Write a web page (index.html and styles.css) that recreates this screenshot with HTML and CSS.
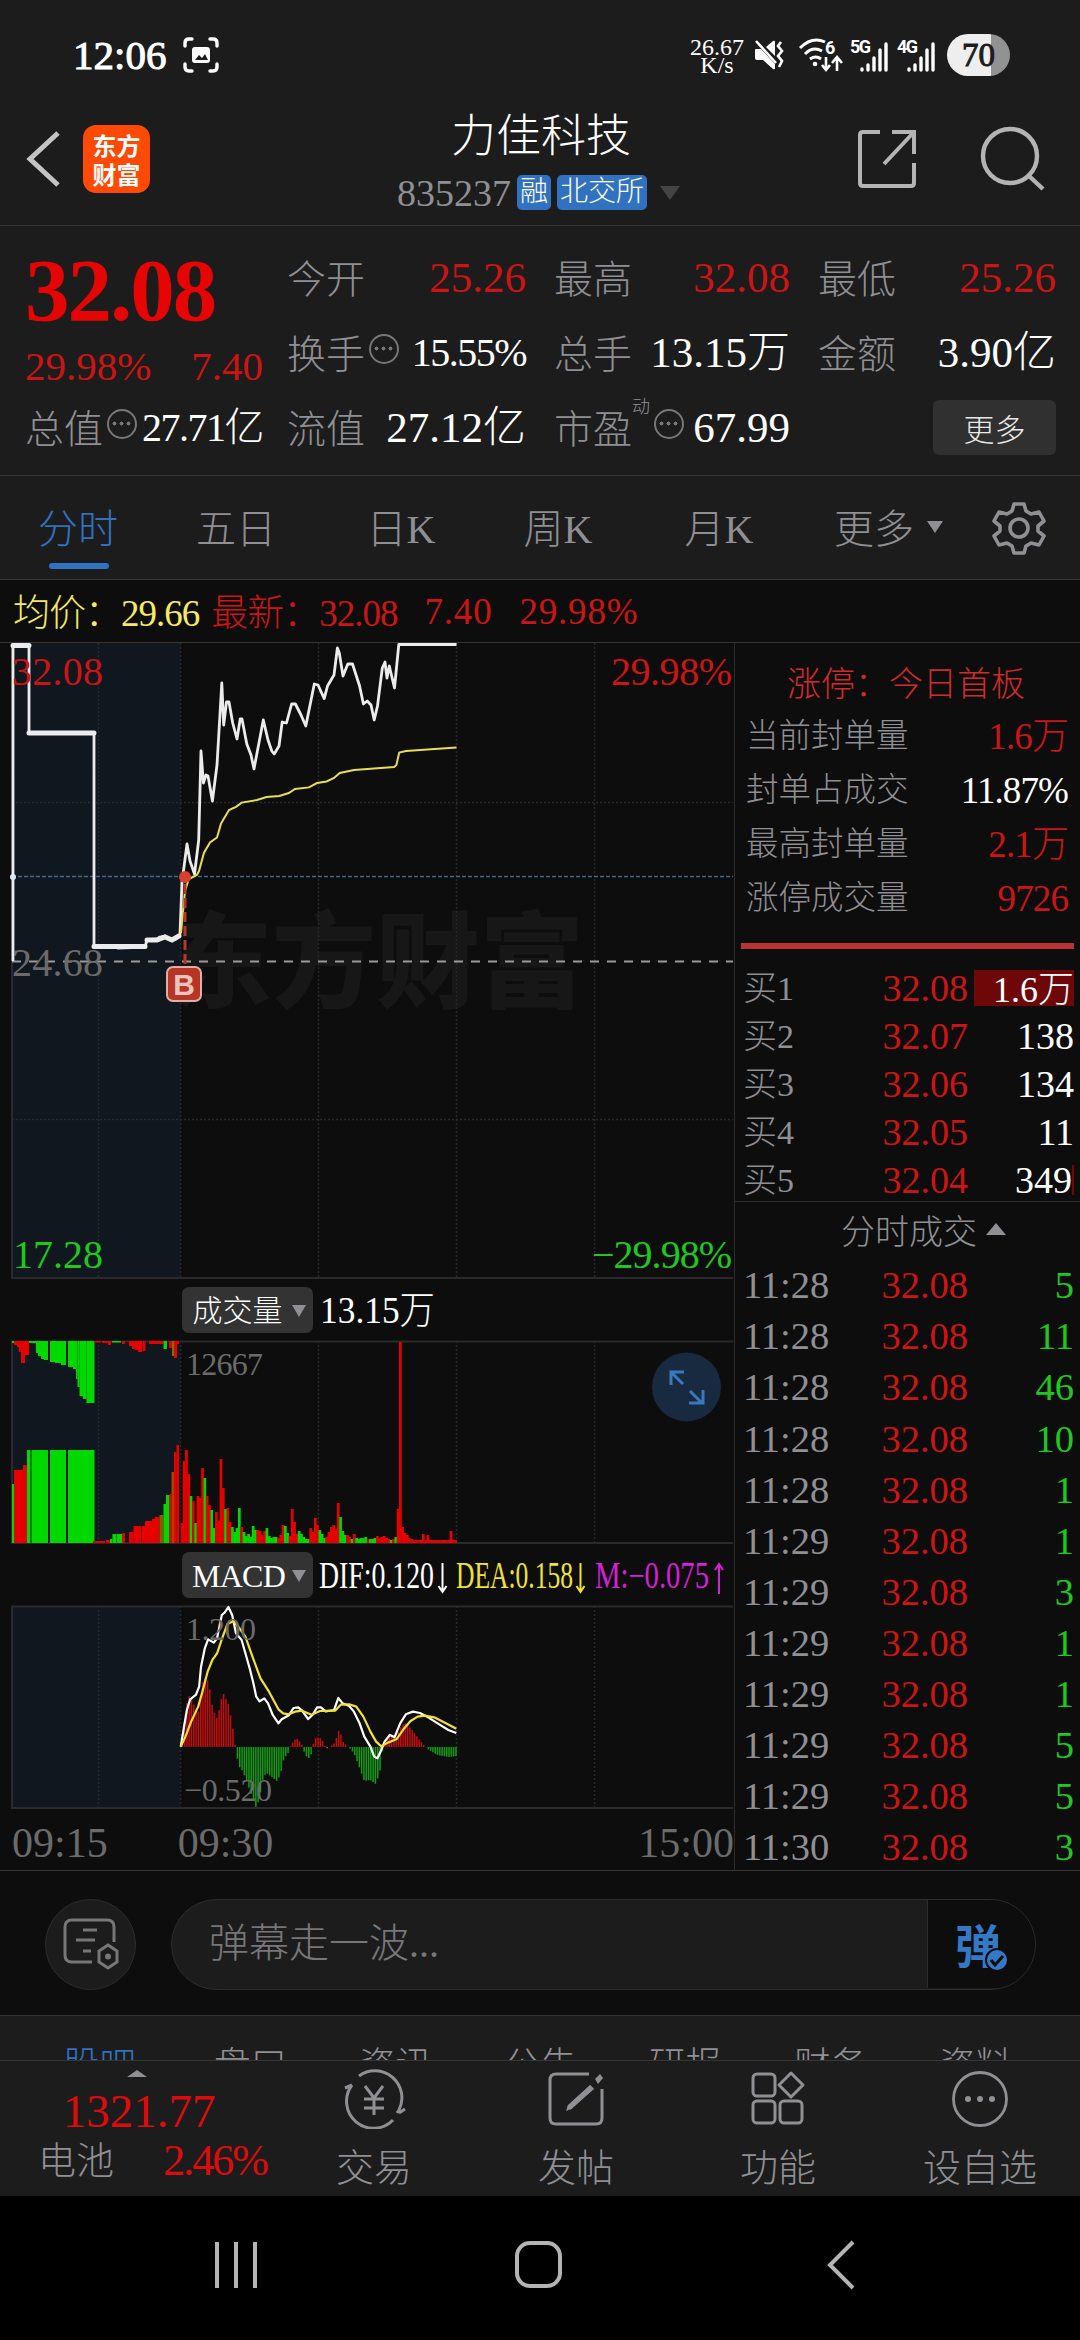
FILE: index.html
```html
<!DOCTYPE html>
<html lang="zh-CN">
<head>
  <meta charset="UTF-8">
  <meta name="viewport" content="width=device-width, initial-scale=1.0">
  <title>力佳科技 835237</title>
  <link rel="stylesheet" href="styles.css">
</head>
<body>
  <div class="status">
    <span class="clock">12:06</span>
    <svg class="shot" width="36" height="36" viewBox="0 0 36 36" fill="none" stroke="#fff" stroke-width="3.4" stroke-linecap="round">
      <path d="M2 9V6q0-4 4-4h3M27 2h3q4 0 4 4v3M34 27v3q0 4-4 4h-3M9 34H6q-4 0-4-4v-3"/>
      <rect x="9" y="10" width="18" height="16" rx="3" fill="#fff" stroke="none"/>
      <path d="M12 23l4-5 3 3 3-4 3 6z" fill="#1c1c1c" stroke="none"/>
    </svg>
    <div class="speed"><span>26.67</span><span>K/s</span></div>
    <svg class="mute" width="32" height="32" viewBox="0 0 32 32" fill="#fff">
      <path d="M1 11q0-1 1-1h5l14 15v4q0 2-2 1L9 21H3q-2 0-2-2zM12 8l7-6q2-1 2 1v14z"/>
      <path d="M2 2l20 22M27 3l-3 4 4 5-4 5 4 5-3 6" fill="none" stroke="#fff" stroke-width="2.6"/>
    </svg>
    <svg class="wifi" width="46" height="36" viewBox="0 0 46 36" fill="none" stroke="#fff" stroke-width="3">
      <path d="M2 11Q14-1 27 5M7 17q8-8 17-3M12 22q6-4 11 0"/>
      <circle cx="17" cy="27" r="2.3" fill="#fff" stroke="none"/>
      <path d="M28 20v12M24 28l4 5 4-5M39 34V21M34 26l5-6 5 6" stroke-width="2.6"/>
      <text x="27" y="17" class="badge-text">6</text>
    </svg>
    <svg class="signal" width="40" height="36" viewBox="0 0 40 36" stroke="#fff" stroke-width="3.4" stroke-linecap="round">
      <path d="M12 33v-1M18 33v-5M24 33V21M30 33V13M36 33V7"/>
      <text x="0" y="16" class="badge-text" textLength="21">5G</text>
    </svg>
    <svg class="signal second" width="40" height="36" viewBox="0 0 40 36" stroke="#fff" stroke-width="3.4" stroke-linecap="round">
      <path d="M12 33v-1M18 33v-5M24 33V21M30 33V13M36 33V7"/>
      <text x="0" y="16" class="badge-text" textLength="21">4G</text>
    </svg>
    <span class="battery">70</span>
  </div>

  <header class="header">
    <div class="header-left">
      <svg width="34" height="56" viewBox="0 0 34 56" fill="none" stroke="#c4c4c4" stroke-width="5"><path d="M32 2L4 28l28 26"/></svg>
      <div class="logo"><span>东方</span><span>财富</span></div>
    </div>
    <div class="header-title">
      <h1>力佳科技</h1>
      <div class="code"><span>835237</span><b>融</b><b>北交所</b><i class="tri-down"></i></div>
    </div>
    <div class="header-right">
      <svg width="62" height="62" viewBox="0 0 62 62" fill="none" stroke="#b4b4b4" stroke-width="4"><path d="M24 4H7q-3 0-3 3v48q0 3 3 3h48q3 0 3-3V35M36 4h22v22M58 4L28 36"/></svg>
      <svg width="66" height="66" viewBox="0 0 66 66" fill="none" stroke="#b4b4b4" stroke-width="4.4"><circle cx="30" cy="30" r="27"/><path d="M49 50l14 13"/></svg>
    </div>
  </header>

  <section class="quote">
    <div class="quote-main">
      <div class="price">32.08</div>
      <div class="change"><span>29.98%</span><span>7.40</span></div>
      <div class="item tight"><label>总值</label><i class="more-dot"></i><span>27.71亿</span></div>
    </div>
    <div class="quote-grid">
      <div class="item up"><label>今开</label><span>25.26</span></div>
      <div class="item up"><label>最高</label><span>32.08</span></div>
      <div class="item up"><label>最低</label><span>25.26</span></div>
      <div class="item tight"><label>换手</label><i class="more-dot"></i><span>15.55%</span></div>
      <div class="item"><label>总手</label><span>13.15万</span></div>
      <div class="item"><label>金额</label><span>3.90亿</span></div>
      <div class="item"><label>流值</label><span>27.12亿</span></div>
      <div class="item"><label>市盈</label><sup>动</sup><i class="more-dot"></i><span>67.99</span></div>
      <div class="item"><button class="more-btn">更多</button></div>
    </div>
  </section>

  <nav class="tabs">
    <a class="active">分时</a>
    <a>五日</a>
    <a>日K</a>
    <a>周K</a>
    <a>月K</a>
    <a>更多<i class="tri-down"></i></a>
    <svg width="54" height="54" viewBox="0 0 54 54" fill="none" stroke="#8f8f94" stroke-width="3.6" stroke-linejoin="round">
      <path d="M22 3h10l2 7 5 3 8-2 5 9-6 5v5l6 5-5 9-8-2-5 3-2 7H22l-2-7-5-3-8 2-5-9 6-5v-5l-6-5 5-9 8 2 5-3z"/>
      <circle cx="27" cy="27" r="9"/>
    </svg>
  </nav>

  <div class="avg">
    <span class="yellow">均价<em>：</em>29.66</span>
    <span>最新<em>：</em>32.08</span>
    <span>7.40</span>
    <span>29.98%</span>
  </div>

  <main class="board">
    <div class="charts">
      <!-- intraday price -->
      <svg class="chart" width="734" height="637" viewBox="0 643 734 637">
        <rect x="12" y="643" width="168.500" height="635" fill="#10171f"/>
        <text x="376" y="1000" class="watermark" textLength="416" lengthAdjust="spacingAndGlyphs">东方财富</text>
        <path class="grid" d="M12 802.500H733M12 1119.500H733M98.500 643V1278M180.500 643V1278M318.500 643V1278M456.500 643V1278M594.500 643V1278"/>
        <path class="frame" d="M12 643V1278H733"/>
        <path d="M12 876.500H733" stroke="#3a6a94" stroke-width="1.500" stroke-dasharray="4 2"/>
        <path d="M12 961.500H733" stroke="#9a9a9a" stroke-width="2" stroke-dasharray="9 8"/>
        <text x="12" y="976" class="axis" textLength="91">24.68</text>
        <polyline class="line" points="13,961 13,645 29,645 29,733 94,733 94,946 115,946 118,948 145,947 147,940 157,939 160,937 165,936 170,940 176,939 180,934 182,882 187,844 190,861 194.500,874 198.700,840 201,751 203.400,783 206,775 208,776 212.400,801 217,765 220,714 221.800,683 223.700,725 226.500,702 229,702 232.700,723 237,739 240.200,719 242,719 246.800,744 251,755 254,769 263.300,720 268,740 271.800,751 274.200,754 279,746 282.200,722 286.500,723 291.600,704 295.400,704 301,715 305.800,726 314.300,684 318,685 324.200,698.600 327.500,686 334,675 337.400,648 339.300,653 343,676 347.800,664 352.500,664 359.600,686 363.400,704 367.200,701 371,705 374.200,720 377.500,706 382.300,668 385,662 387,678 389.300,666 394.500,688 398.800,644.500 456.500,644.500"/>
        <path d="M13 645.500H29M29 733H94M94 946.500H145M147 940H157L165 937L172 940L179 936" class="thick"/>
        <polyline class="line-avg" points="181,933 185,891 188.800,879 196.800,875 199,871 203.900,853 210,842.500 217,837.500 221,823.600 229,810 236,806.800 241.600,802.600 257,800 266.600,797 279.400,796 288.800,793 295,789 309,787.400 317,783 326.600,781.500 334,778 339.800,773 354,770 394,767 396.400,765 399.200,752.500 406,751 456.500,747.400"/>
        <path d="M185 884V966" stroke="#b03a2a" stroke-width="3" stroke-dasharray="10 4"/>
        <circle cx="185" cy="877" r="6" fill="#d8402f"/>
        <circle cx="13" cy="877" r="3" fill="#dfe9f5"/>
        <rect x="167" y="967" width="34" height="34" rx="6" fill="#b83425" stroke="#dcb0a8" stroke-width="2"/>
        <text x="184" y="995" class="mark" text-anchor="middle">B</text>
        <text x="12" y="685" class="up-text" textLength="91">32.08</text>
        <text x="732" y="685" class="up-text" text-anchor="end" textLength="121">29.98%</text>
        <text x="13" y="1268" class="down-text" textLength="90">17.28</text>
        <text x="732" y="1268" class="down-text" text-anchor="end" textLength="140">−29.98%</text>
      </svg>

      <div class="pane-head">
        <div class="picker">成交量<i class="tri-down"></i></div>
        <svg width="416" height="60" viewBox="318 0 416 60"><text x="320" y="43" class="head-text" textLength="115" lengthAdjust="spacingAndGlyphs">13.15万</text></svg>
      </div>

      <svg class="chart" width="734" height="205" viewBox="0 1340 734 205">
        <rect x="12" y="1341" width="168.500" height="202" fill="#10171f"/>
        <path class="grid" d="M98.500 1341V1543M318.500 1341V1543M456.500 1341V1543M594.500 1341V1543"/>
        <path class="frame" d="M733 1341.500H12V1543H733"/>
        <g id="volume"></g>
        <path class="grid" d="M180.500 1341V1543"/>
        <text x="186" y="1375" class="scale" textLength="77">12667</text>
        <circle cx="686.500" cy="1387" r="34.500" fill="#182a40"/>
        <path d="M683 1384L672 1373M671 1385V1372H684M690 1391L702 1403M703 1390V1403H689" fill="none" stroke="#3a78bd" stroke-width="3"/>
      </svg>

      <div class="pane-head">
        <div class="picker macd-pick">MACD<i class="tri-down"></i></div>
        <svg width="416" height="60" viewBox="318 0 416 60" class="macd-values">
          <text x="319" y="43" fill="#fff" textLength="115" lengthAdjust="spacingAndGlyphs">DIF:0.120</text>
          <path d="M442.500 18V46M438.500 41l4 6 4-6" stroke="#fff"/>
          <text x="456" y="43" fill="#f2e233" textLength="117" lengthAdjust="spacingAndGlyphs">DEA:0.158</text>
          <path d="M580.500 18V46M576.500 41l4 6 4-6" stroke="#f2e233"/>
          <text x="595" y="43" fill="#d81ed8" textLength="114" lengthAdjust="spacingAndGlyphs">M:−0.075</text>
          <path d="M719 49V20M715 25l4-6 4 6" stroke="#d81ed8"/>
        </svg>
      </div>

      <svg class="chart" width="734" height="205" viewBox="0 1605 734 205">
        <rect x="12" y="1606" width="168.500" height="202" fill="#10171f"/>
        <path class="grid" d="M98.500 1606V1808M180.500 1606V1808M318.500 1606V1808M456.500 1606V1808M594.500 1606V1808"/>
        <path class="frame" d="M733 1606.500H12V1808H733"/>
        <g id="macd"></g>
        <g transform="matrix(.4719 0 0 .3333 0 1540)">
          <polyline class="dif" points="383,620 390,560 396,510 403,478 415,465 422,440 426,380 434,325 441,298 453,308 460,295 470,225 476,218 484,201 492,225 500,280 512,300 520,340 530,390 537,430 543,470 550,484 560,475 568,490 578,525 590,550 597,538 612,526 622,504 632,502 640,512 653,537 662,525 672,502 680,502 690,514 708,510 717,474 726,490 740,498 750,515 762,550 772,590 785,620 793,650 800,655 808,630 815,605 826,585 836,592 848,550 860,523 875,515 890,519 905,530 925,548 950,570 967,579"/>
          <polyline class="dea" points="383,620 393,590 405,545 420,500 428,460 440,395 450,360 460,340 472,290 482,252 494,244 505,260 520,290 535,350 552,415 570,455 590,508 600,520 612,523 625,515 640,512 660,524 678,513 710,512 722,494 740,493 755,500 770,530 785,575 797,605 808,619 822,608 840,598 855,568 870,543 885,530 900,527 920,532 945,550 967,566"/>
        </g>
        <text x="186" y="1640" class="scale" textLength="70">1.200</text>
        <text x="184" y="1801" class="scale" textLength="88">−0.520</text>
      </svg>

      <div class="times"><span>09:15</span><span>09:30</span><span>15:00</span></div>
    </div>

    <aside class="side">
      <div class="limit">
        <h2>涨停<em>：</em>今日首板</h2>
        <div><label>当前封单量</label><span class="red">1.6万</span></div>
        <div><label>封单占成交</label><span>11.87%</span></div>
        <div><label>最高封单量</label><span class="red">2.1万</span></div>
        <div><label>涨停成交量</label><span class="red">9726</span></div>
      </div>
      <div class="orders">
        <div><label>买1</label><b>32.08</b><span class="full">1.6万</span></div>
        <div><label>买2</label><b>32.07</b><span>138</span></div>
        <div><label>买3</label><b>32.06</b><span>134</span></div>
        <div><label>买4</label><b>32.05</b><span>11</span></div>
        <div><label>买5</label><b>32.04</b><span class="sliver">349</span></div>
      </div>
      <div class="ticks">
        <h3>分时成交<i class="tri-up"></i></h3>
        <div><label>11:28</label><b>32.08</b><span>5</span></div>
        <div><label>11:28</label><b>32.08</b><span>11</span></div>
        <div><label>11:28</label><b>32.08</b><span>46</span></div>
        <div><label>11:28</label><b>32.08</b><span>10</span></div>
        <div><label>11:28</label><b>32.08</b><span>1</span></div>
        <div><label>11:29</label><b>32.08</b><span>1</span></div>
        <div><label>11:29</label><b>32.08</b><span>3</span></div>
        <div><label>11:29</label><b>32.08</b><span>1</span></div>
        <div><label>11:29</label><b>32.08</b><span>1</span></div>
        <div><label>11:29</label><b>32.08</b><span>5</span></div>
        <div><label>11:29</label><b>32.08</b><span>5</span></div>
        <div><label>11:30</label><b>32.08</b><span>3</span></div>
      </div>
    </aside>
  </main>

  <div class="comment">
    <div class="round">
      <svg width="58" height="54" viewBox="0 0 58 54" fill="none" stroke="#77777a" stroke-width="3">
        <path d="M52 25V10q0-7-7-7H10Q3 3 3 10v28q0 7 7 7h20M21 13h14M14 23h19M21 34h8"/>
        <path d="M46 28l9 6v11l-9 6-9-6V34z"/><circle cx="46" cy="39.500" r="3" fill="#77777a" stroke="none"/>
      </svg>
    </div>
    <div class="input">
      <span>弹幕走一波...</span>
      <div class="danmu">弹
        <svg width="24" height="24" viewBox="0 0 24 24"><circle cx="12" cy="12" r="11" fill="#3579c6" stroke="#0d0d0d" stroke-width="2"/><path d="M6 12l4 5 8-9" fill="none" stroke="#0d0d0d" stroke-width="3"/></svg>
      </div>
    </div>
  </div>

  <div class="subtabs">
    <span class="active">股吧</span><span>盘口</span><span>资讯</span><span>公告</span><span>研报</span><span>财务</span><span>资料</span>
  </div>

  <footer class="bottom">
    <div class="index">
      <i class="tri-up"></i>
      <strong>1321.77</strong>
      <div><label>电池</label><span>2.46%</span></div>
    </div>
    <div class="nav-item">
      <svg width="66" height="60" viewBox="0 0 66 60" fill="none" stroke="#8f8f94" stroke-width="3">
        <path d="M18 7A27 27 0 0 1 58 41l-2 3M4 19l7-3M11 16A27 27 0 0 0 52 51M58 44l6-4"/>
        <path d="M24 17l9 12 9-12M23 30h20M23 39h20M33 29v17"/>
      </svg>
      <span>交易</span>
    </div>
    <div class="nav-item">
      <svg width="58" height="60" viewBox="0 0 58 60" fill="none" stroke="#8f8f94" stroke-width="3">
        <path d="M42 5H9Q3 5 3 11v38q0 6 6 6h40q6 0 6-6V20"/>
        <path d="M43 16l4 4L24 40l-5 2 2-6zM48 10l5-5 3 4-5 6z" fill="#8f8f94" stroke="none"/>
        <path d="M45 18L22 39" stroke-width="5"/>
      </svg>
      <span>发帖</span>
    </div>
    <div class="nav-item">
      <svg width="58" height="60" viewBox="0 0 58 60" fill="none" stroke="#8f8f94" stroke-width="3">
        <rect x="4" y="5" width="22" height="22" rx="4"/><rect x="4" y="32" width="22" height="22" rx="4"/><rect x="31" y="32" width="22" height="22" rx="4"/>
        <path d="M42 4l12 12-12 12-12-12z" stroke-linejoin="round"/>
      </svg>
      <span>功能</span>
    </div>
    <div class="nav-item">
      <svg width="58" height="60" viewBox="0 0 58 60" fill="#8f8f94">
        <circle cx="29" cy="30" r="26.500" fill="none" stroke="#8f8f94" stroke-width="2.800"/>
        <circle cx="17" cy="30" r="3"/><circle cx="29" cy="30" r="3"/><circle cx="41" cy="30" r="3"/>
      </svg>
      <span>设自选</span>
    </div>
  </footer>

  <div class="system-nav">
    <svg width="46" height="50" viewBox="0 0 46 50" stroke="#b4b4b4" stroke-width="4"><path d="M4 2v46M23 2v46M42 2v46"/></svg>
    <svg width="50" height="50" viewBox="0 0 50 50" fill="none" stroke="#b4b4b4" stroke-width="4"><rect x="4" y="3" width="43" height="43" rx="13"/></svg>
    <svg width="30" height="50" viewBox="0 0 30 50" fill="none" stroke="#b4b4b4" stroke-width="4"><path d="M27 2L4 25l23 23"/></svg>
  </div>

  <script src="charts.js"></script>
</body>
</html>
```

FILE: styles.css
```css
* {
  box-sizing: border-box;
}
body {
  margin: 0;
  width: 1080px;
  height: 2340px;
  overflow: hidden;
  background-color: #0d0d0d;
  color: #fff;
  font-family: "Liberation Serif", "Noto Sans CJK SC", serif;
  font-weight: 300;
  line-height: 1;
  white-space: nowrap;
}
h1, h2, h3 {
  margin: 0;
  font-weight: 300;
}
/* centred full-width colon */
em {
  font-family: "Noto Sans CJK TC", sans-serif;
  font-style: normal;
}
svg {
  display: block;
  flex: none;
}
i {
  flex: none;
}
.tri-down {
  border: 9px solid transparent;
  border-top: 14px solid #8f8f94;
  border-bottom: 0;
}
.tri-up {
  border: 10px solid transparent;
  border-bottom: 12px solid #8f8f94;
  border-top: 0;
}

/* status bar */
.status {
  display: flex;
  align-items: center;
  height: 110px;
  padding: 0 70px 0 73px;
  background-color: #1c1c1c;
}
.clock {
  width: 110px;
  font-size: 41px;
  -webkit-text-stroke: 1px #fff;
}
.speed {
  display: flex;
  flex-direction: column;
  align-items: center;
  width: 52px;
  margin: 1px 11px 0 472px;
  font-size: 24px;
  line-height: 18px;
}
.mute {
  margin-right: 12px;
}
.wifi {
  margin-right: 6px;
}
.signal.second {
  margin: 0 10px 0 7px;
}
.badge-text {
  font: bold 18px "Roboto", sans-serif;
  fill: #fff;
  stroke: none;
}
.battery {
  width: 63px;
  height: 42px;
  border-radius: 21px;
  background: linear-gradient(90deg, #eee 70%, #929292 70%);
  color: #1c1c1c;
  font-size: 33px;
  line-height: 42px;
  text-align: center;
  -webkit-text-stroke: 1px #1c1c1c;
}

/* header */
.header {
  display: grid;
  grid-template-columns: 300px 1fr 300px;
  height: 116px;
  background-color: #1c1c1c;
  border-bottom: 1px solid #353535;
}
.header-left {
  display: flex;
  align-items: center;
  gap: 23px;
  padding: 0 0 18px 26px;
}
.logo {
  display: flex;
  flex-direction: column;
  align-items: center;
  justify-content: center;
  width: 67px;
  height: 68px;
  border-radius: 13px;
  background-color: #ff4a05;
  font: bold 24px/29px "Noto Sans CJK SC", sans-serif;
}
.header-title {
  display: flex;
  flex-direction: column;
  align-items: center;
}
.header-title h1 {
  height: 65px;
  padding-left: 2px;
  font-size: 45px;
  line-height: 54px;
}
.code {
  display: flex;
  align-items: center;
  height: 35px;
  margin-right: 3px;
  font-size: 38px;
  color: #8f8f94;
}
.code b {
  height: 35px;
  margin-left: 6px;
  padding: 0 3px;
  border-radius: 5px;
  background-color: #3172c0;
  color: #fff;
  font-weight: 300;
  font-size: 28px;
  line-height: 34px;
}
.code .tri-down {
  margin-left: 13px;
  border-width: 14px 10px 0;
  border-top-color: #444;
}
.header-right {
  display: flex;
  align-items: center;
  justify-content: flex-end;
  gap: 62px;
  padding: 0 34px 18px 0;
}

/* quote */
.quote {
  display: flex;
  height: 250px;
  padding: 14px 24px 10px 25px;
  background-color: #1c1c1c;
  border-bottom: 1px solid #353535;
}
.quote-main {
  width: 239px;
  margin-right: 24px;
}
.price {
  height: 102px;
  color: #e60505;
  font-size: 89px;
  font-weight: bold;
  letter-spacing: -2px;
  line-height: 100px;
}
.change {
  display: flex;
  justify-content: space-between;
  height: 48px;
  color: #cc1414;
  font-size: 41px;
  line-height: 48px;
}
.quote-grid {
  display: grid;
  grid-template-columns: 239px 236px 238px;
  grid-template-rows: repeat(3, 75px);
  column-gap: 28px;
}
.item {
  display: flex;
  align-items: center;
  height: 75px;
  font-size: 43px;
}
.item label {
  padding-top: 3px;
  color: #8f8f94;
  font-size: 39px;
}
.item span {
  margin-left: auto;
}
.item.up span {
  color: #cc1414;
}
.item.tight span {
  font-size: 40px;
  letter-spacing: -1.500px;
}
.item sup {
  align-self: flex-start;
  margin-top: 8px;
  color: #8f8f94;
  font-size: 18px;
}
.more-dot {
  width: 30px;
  height: 30px;
  margin: -7px 0 0 4px;
  border: 2.500px solid #77777a;
  border-radius: 50%;
  background: radial-gradient(circle, #77777a 1.800px, transparent 2.200px) 0 0 / 7px 25px repeat-x content-box;
  padding: 0 2px;
}
.more-btn {
  width: 123px;
  height: 55px;
  margin-left: auto;
  padding: 0;
  border: 0;
  border-radius: 6px;
  background-color: #303030;
  color: #e8e8e8;
  font: 300 31px "Noto Sans CJK SC", sans-serif;
  line-height: 52px;
}

/* period tabs */
.tabs {
  display: flex;
  align-items: center;
  height: 104px;
  padding-right: 34px;
  background-color: #1c1c1c;
  border-bottom: 1px solid #353535;
  color: #8f8f94;
  font-size: 40px;
}
.tabs a {
  position: relative;
  padding-top: 5px;
  text-align: center;
}
.tabs a:nth-child(1) {
  width: 156px;
}
.tabs a:nth-child(2) {
  width: 160px;
}
.tabs a:nth-child(3) {
  width: 170px;
}
.tabs a:nth-child(4) {
  width: 144px;
}
.tabs a:nth-child(5) {
  width: 178px;
}
.tabs a:nth-child(6) {
  display: flex;
  align-items: center;
  padding-left: 26px;
}
.tabs .tri-down {
  margin: -7px 0 0 13px;
  border-width: 12px 8px 0;
}
.tabs .active {
  color: #3172c0;
}
.tabs .active::after {
  content: "";
  position: absolute;
  left: 49px;
  bottom: -19px;
  width: 60px;
  height: 6px;
  border-radius: 3px;
  background-color: #3172c0;
}
.tabs svg {
  margin-left: auto;
}

.avg {
  display: flex;
  align-items: center;
  height: 63px;
  padding: 1px 0 0 13px;
  border-bottom: 1px solid #353535;
  color: #cc1414;
  font-size: 37px;
}
.avg span {
  margin-right: 27px;
  letter-spacing: .8px;
}
.avg span:nth-child(-n+2) {
  letter-spacing: -1px;
}
.avg .yellow {
  margin-right: 12px;
  color: #f5ea62;
}

/* charts */
.board {
  display: flex;
  height: 1228px;
  border-bottom: 1px solid #353535;
}
.charts {
  width: 735px;
  border-right: 1px solid #2c2c2c;
}
.chart text {
  font-size: 40px;
}
.chart polyline, .grid, .frame, .thick {
  fill: none;
}
.grid {
  stroke: #28292d;
  stroke-width: 1.500;
  stroke-dasharray: 2 2;
}
.frame {
  stroke: #2a2a2c;
  stroke-width: 2;
}
.line {
  stroke: #ececec;
  stroke-width: 2.800;
  stroke-linejoin: round;
}
.thick {
  stroke: #ececec;
  stroke-width: 5;
  stroke-linecap: round;
}
.line-avg {
  stroke: #e9dd50;
  stroke-width: 2;
}
.chart .dif, .chart .dea {
  stroke: #fff;
  stroke-width: 2.200;
  stroke-linejoin: round;
  vector-effect: non-scaling-stroke;
}
.chart .dea {
  stroke: #f2e233;
}
.axis {
  fill: #6b6b6b;
}
.up-text {
  fill: #cc1414;
}
.down-text {
  fill: #1ec81e;
}
.chart .scale {
  fill: #6b6b6b;
  font-size: 32px;
}
.chart .mark {
  fill: #e8c4be;
  font: bold 30px "Liberation Sans", sans-serif;
}
.chart .watermark {
  fill: #171717;
  font: 900 104px "Noto Sans CJK SC", sans-serif;
  text-anchor: middle;
}
.pane-head {
  display: flex;
  height: 60px;
  padding-left: 182px;
}
.picker {
  display: flex;
  align-items: center;
  justify-content: center;
  gap: 9px;
  width: 131px;
  height: 46px;
  margin: 7px 5px 0 0;
  padding: 2px 0 0 3px;
  border-radius: 7px;
  background-color: #333;
  font-size: 30px;
}
.macd-pick {
  gap: 7px;
  font-size: 32px;
  letter-spacing: -.7px;
}
.picker .tri-down {
  border-width: 12px 7px 0;
}
.head-text {
  fill: #fff;
  font-size: 38px;
}
.macd-values text {
  font-size: 37px;
}
.macd-values path {
  fill: none;
  stroke-width: 2;
}
.times {
  display: flex;
  align-items: center;
  height: 62px;
  padding: 3px 0 0 12px;
  color: #6b6b6b;
  font-size: 42px;
}
.times span:nth-child(2) {
  margin: 0 auto 0 70px;
}

/* order book */
.side {
  width: 345px;
  font-size: 38px;
}
.side label {
  color: #8f8f94;
}
.side b {
  color: #cc1414;
  font-weight: 300;
}
.limit {
  height: 306px;
  margin: 0 6px 0 6px;
  padding: 12px 6px 0 5px;
  border-bottom: 6px solid #b83434;
}
.limit h2 {
  height: 54px;
  padding-right: 2px;
  color: #d02a2a;
  font-size: 34px;
  line-height: 54px;
  text-align: center;
}
.limit div {
  display: flex;
  align-items: center;
  justify-content: space-between;
  height: 54px;
  font-size: 37px;
}
.limit label {
  font-size: 32.500px;
}
.limit span {
  letter-spacing: -.9px;
}
.limit .red {
  color: #cc1414;
}
.orders {
  height: 253px;
  padding: 15px 6px 0 8px;
  border-bottom: 1px solid #2c2c2c;
}
.orders div, .ticks div {
  display: grid;
  grid-template-columns: 112px 113px 106px;
  align-items: center;
  height: 48px;
}
.orders b, .orders span, .ticks b, .ticks span {
  text-align: right;
}
.orders label {
  padding-top: 2px;
  font-size: 34px;
}
.orders span {
  justify-self: end;
  width: 100px;
  height: 30px;
  line-height: 30px;
}
.orders .full {
  height: 36px;
  background-color: #6e0808;
  font-size: 36px;
  line-height: 40px;
}
.orders .sliver {
  border-right: 2px solid #6e0808;
}
.ticks {
  padding: 0 6px 0 8px;
}
.ticks h3 {
  display: flex;
  align-items: center;
  justify-content: center;
  height: 58px;
  padding: 3px 0 0 30px;
  color: #8f8f94;
  font-size: 34px;
}
.ticks h3 i {
  margin: -8px 0 0 9px;
}
.ticks div {
  height: 51.100px;
  font-size: 38.500px;
}
.ticks span {
  color: #1ec81e;
}

/* comment bar */
.comment {
  display: flex;
  align-items: center;
  gap: 35px;
  height: 145px;
  padding: 2px 44px 0 45px;
  border-bottom: 1px solid #353535;
}
.round {
  display: flex;
  align-items: center;
  justify-content: center;
  width: 91px;
  height: 91px;
  border: 1.500px solid #2c2c2c;
  border-radius: 50%;
  background-color: #1c1c1c;
}
.input {
  display: flex;
  align-items: center;
  width: 865px;
  height: 91px;
  padding-left: 37px;
  border: 1.500px solid #2c2c2c;
  border-radius: 46px;
  background-color: #1c1c1c;
  color: #77777a;
  font-size: 40px;
  overflow: hidden;
}
.danmu {
  position: relative;
  width: 108px;
  height: 88px;
  margin-left: auto;
  padding-left: 27px;
  border-left: 1px solid #2c2c2c;
  background-color: #0d0d0d;
  color: #3579c6;
  font: bold 46px/86px "Noto Sans CJK SC", sans-serif;
}
.danmu svg {
  position: absolute;
  left: 57px;
  top: 48px;
}

.subtabs {
  display: flex;
  gap: 72px;
  height: 45px;
  padding: 32px 0 0 63px;
  overflow: hidden;
  background-color: #1c1c1c;
  border-bottom: 1px solid #353535;
  color: #8f8f94;
  font-size: 36.500px;
}
.subtabs .active {
  margin-right: 6px;
  color: #3172c0;
}

/* bottom bar */
.bottom {
  display: grid;
  grid-template-columns: 273px repeat(4, 202px);
  height: 135px;
  background-color: #1c1c1c;
}
.index {
  display: flex;
  flex-direction: column;
  align-items: center;
  color: #dc0c0c;
  padding-top: 9px;
}
.index .tri-up {
  border-width: 0 10px 7px;
}
.index strong {
  margin: 14px 0 8px 5px;
  font-size: 47px;
  font-weight: 300;
  line-height: 40px;
}
.index div {
  display: flex;
  align-items: center;
  justify-content: space-between;
  width: 229px;
  margin-left: 32px;
  font-size: 44px;
}
.index label {
  color: #8f8f94;
  font-size: 38px;
}
.index span {
  letter-spacing: -2px;
}
.nav-item {
  display: flex;
  flex-direction: column;
  align-items: center;
  gap: 20px;
  padding-top: 8px;
  color: #8f8f94;
  font-size: 38px;
}

.system-nav {
  display: flex;
  align-items: center;
  height: 144px;
  padding: 0 0 6px 213px;
  background-color: #000;
}
.system-nav svg + svg {
  margin-left: 254px;
}
.system-nav svg:last-child {
  margin-left: 263px;
}
```

FILE: charts.js
```js
const NS = 'http://www.w3.org/2000/svg';
const RED = '#e60000';
const GREEN = '#00d800';

function addRect(parent, x, y, w, h, fill) {
  const r = document.createElementNS(NS, 'rect');
  r.setAttribute('x', x);
  r.setAttribute('y', y);
  r.setAttribute('width', w);
  r.setAttribute('height', h);
  r.setAttribute('fill', fill);
  parent.appendChild(r);
}

// minute volume from 09:30, negative = falling minute
const volume = [
  20, 82, 93, 69, -47, 42, -20, 47, 45, 75, -65, 47, 38, -33, -15, 31, 22, 84, 55, -34,
  35, 21, -16, -11, -15, -35, 16, -11, -7, -9, -6, -17, -13, 13, 12, 8, 12, -15, -7, -5,
  -6, -6, 5, 8, 18, -17, -10, 7, 34, 21, 9, -12, -9, -6, -4, -4, 15, 11, 25, 18,
  -13, -9, -5, 6, 11, 16, 18, 14, 40, -26, -12, -8, 8, 6, -4, 9, -5, -4, -5, -5,
  -6, 4, -4, -4, -5, 7, 5, 6, 7, 5, 4, -3, 4, -6, 34, 201, 16, 10, 8, 5,
  4, 3, 3, 3, 3, 9, 3, 8, 3, 3, 3, 3, 3, 3, 3, 3, 3, 12, 3, 3
];
const step = 2.3;
const volumeGroup = document.getElementById('volume');
volume.forEach((v, i) => {
  const h = Math.abs(v);
  addRect(volumeGroup, 180.5 + i * step, 1543 - h, step + 0.4, h, v > 0 ? RED : GREEN);
});

// call auction: [x, width, height, color], matched volume from the bottom
const matched = [
  [12, 2, 59, GREEN], [14, 9, 73, RED], [23, 4, 78, RED], [27, 3.5, 93, GREEN],
  [31.5, 16.5, 93, GREEN], [50, 16, 93, GREEN], [68, 26.5, 93, GREEN],
  [93, 12, 2, RED], [106, 4, 3, RED], [110, 2.5, 4, GREEN], [112.5, 4, 9, GREEN], [117, 5, 9, GREEN],
  [122, 3, 10, RED], [129, 4.5, 11, RED], [133.5, 8, 17, RED], [142, 3, 17, RED], [145, 7, 22, RED],
  [152, 3, 24, RED], [155, 4.5, 26, RED], [159.500, 4, 28, '#8a5a00'], [163.500, 2.5, 39, GREEN],
  [166, 3.5, 48, GREEN], [169.500, 2, 49, RED], [171.500, 2.5, 71, '#b04000'], [174, 2.5, 91, RED], [176.500, 2.5, 98, RED]
];
matched.forEach(([x, w, h, c]) => addRect(volumeGroup, x, 1543 - h, w, h, c));

// unmatched volume hangs from the top
const unmatched = [
  [12, 2, 2, GREEN], [14, 3, 4, RED], [17, 2, 6, RED], [19, 2, 11, RED], [21, 4, 22, RED], [25, 4, 14, RED],
  [29, 7, 2, GREEN], [36, 2, 12, GREEN], [38, 3, 15, GREEN], [41, 3, 18, GREEN], [44, 4, 19, GREEN],
  [50, 5, 21, GREEN], [55, 6, 22, GREEN], [61, 5, 24, GREEN], [68, 5, 26, GREEN], [73, 3, 28, GREEN],
  [76, 1.5, 38, GREEN], [77.5, 2, 46, GREEN], [79.5, 3.5, 55, GREEN], [83, 3.5, 58, GREEN], [86.5, 8, 62, GREEN],
  [94, 7, 1.5, RED], [102, 6, 2, RED], [108, 3, 4, RED], [112, 9, 1.5, GREEN], [122, 3, 3, RED],
  [129, 3, 5, RED], [132, 3, 8, RED], [135, 3, 9, RED], [138, 4, 11, RED], [142.500, 3, 10, RED],
  [149, 14, 3, RED], [163.500, 3.5, 8, GREEN], [169, 3, 7, RED], [172, 2, 15, '#7a7000'], [174, 3, 17, RED], [177, 2, 3, RED]
];
unmatched.forEach(([x, w, h, c]) => addRect(volumeGroup, x, 1341, w, h, c));

// macd histogram envelope: [x, value]
const hist = [
  [180.5, 5], [182.5, 15], [187, 51], [190, 51], [194.5, 38], [198, 35], [203, 71], [208, 65], [212, 38], [216.5, 28],
  [222, 55], [227.5, 43], [231, 26], [233.5, 8], [235.5, -5], [238, -19], [242, -24], [248, -40], [255.5, -61], [258.5, -52],
  [262.5, -30], [265.5, -26], [271, -30], [276, -34], [279.5, -28], [283, -12], [288, -5], [290, 2], [295.5, 9], [300.5, 4],
  [303.5, -5], [307, -12], [310, -9], [312, 2], [315, 9], [318.5, 10], [322, 6], [325.5, -2], [330, 1], [334, 4],
  [338.5, 18], [342.5, 5], [346, 1], [350, -2], [354, -8], [358.5, -20], [363.5, -34], [369.5, -33], [375, -37], [379, -26],
  [381.5, -5], [383, 5], [389, 14], [395.5, 10], [401, 22], [404, 24], [410, 19], [418, 8], [423, 2], [427, -2],
  [436.5, -8], [448, -10], [457, -9]
];
const macdGroup = document.getElementById('macd');
let k = 0;
for (let x = 181.5; x < 457; x += step) {
  while (hist[k + 1][0] < x) k++;
  const [x0, v0] = hist[k];
  const [x1, v1] = hist[k + 1];
  const v = v0 + (v1 - v0) * (x - x0) / (x1 - x0);
  addRect(macdGroup, x, v > 0 ? 1747 - v : 1747, 1.5, Math.abs(v), v > 0 ? '#c80c0c' : '#12a012');
}
```
